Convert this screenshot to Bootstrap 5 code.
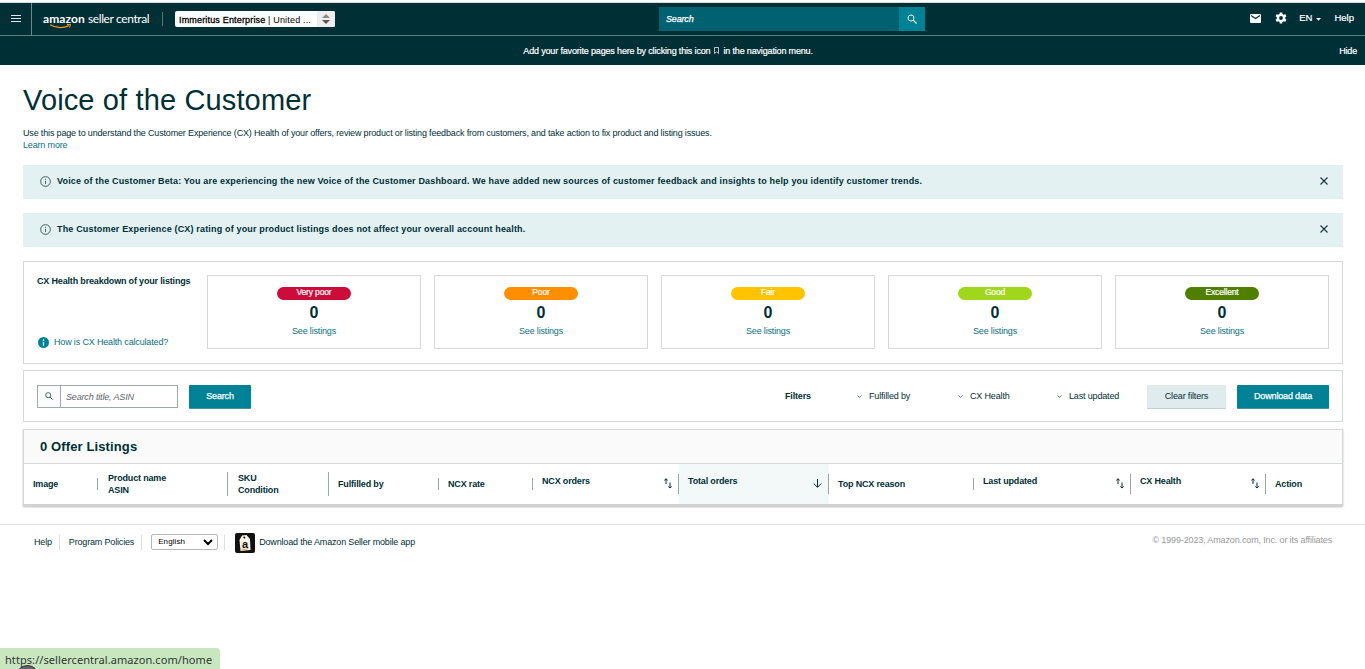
<!DOCTYPE html>
<html lang="en">
<head>
<meta charset="utf-8">
<meta name="viewport" content="width=device-width, initial-scale=1">
<title>Voice of the Customer</title>
<link rel="stylesheet" href="https://cdn.jsdelivr.net/npm/bootstrap@5.3.0/dist/css/bootstrap.min.css">
<style>
  :root { --ink:#002f36; --teal:#008296; --link:#0b6f82; --line:#d5d9d9; }
  body { font:9px/12px "Liberation Sans",Arial,sans-serif; letter-spacing:-.16px; color:var(--ink); background:#fff; height:669px; overflow:hidden; }
  svg { display:block; flex:none; }
  a { color:var(--link); text-decoration:none; }
  .topbar { border-top:1px solid #d7dcdd; margin-top:2px; background:var(--ink); height:33px; padding:0 11px 0 0; color:#fff; }
  .menu-cell { width:32px; height:33px; border-right:1px solid #6a8a8d; }
  .brand { width:107px; margin-left:11px; margin-top:-1px; font-family:Lato,sans-serif; font-size:12px; line-height:14px; position:relative; }
  .brand b { letter-spacing:.1px; }
  .brand span { letter-spacing:-.38px; margin-left:3px; }
  .brand svg { position:absolute; left:6px; top:12px; }
  .divide { width:1px; height:14px; background:#58767a; margin-left:12px; }
  .account { width:160px; height:16px; margin-left:12px; padding-left:4px; background:#fff; color:#000; border-radius:2px; overflow:hidden; letter-spacing:.2px; font-size:9px; }
  .account b { font-weight:400; -webkit-text-stroke:.3px #000; }
  .account .label { letter-spacing:.17px; padding-top:1px; }
  .account .spin { width:18px; height:16px; background:#eee; }
  .find { width:266px; height:24px; margin-left:324px; }
  .find .field { background:#006170; padding-left:7px; font-style:italic; -webkit-text-stroke:.25px #fff; }
  .find .go { width:26px; background:var(--teal); padding:0 1px 1px 0; }
  .tools { -webkit-text-stroke:.2px #fff; letter-spacing:0; font-size:9.5px; padding-bottom:2px; }
  .favbar { height:30px; border-top:1px solid #5f8080; background:var(--ink); color:#fff; padding:0 8px; -webkit-text-stroke:.2px #fff; }
  main { padding:0 22px 0 23px; }
  h1 { font-size:29px; line-height:34px; letter-spacing:.14px; margin:18px 0 10px; font-weight:400; color:var(--ink); }
  .notice { height:34px; background:#e3f1f3; padding:0 15px 2px 17px; font-weight:700; letter-spacing:.165px; }
  .panel { border:1px solid var(--line); }
  .health { height:103px; padding:13px; }
  .health .intro { width:157px; padding-bottom:2px; }
  .health .intro b { letter-spacing:-.17px; }
  .rating { width:214px; height:74px; border:1px solid var(--line); padding-top:11px; }
  .pill { width:74px; height:13px; line-height:11px; border-radius:7px; color:#fff; font-size:8.5px; -webkit-text-stroke:.2px #fff; }
  .num { font-size:16px; line-height:18px; font-weight:700; letter-spacing:0; margin:4px 0 3px; }
  .filters { height:52px; padding:0 13px; }
  .lookup { width:141px; height:23px; border:1px solid #a2a9ab; }
  .lookup .ic { width:23px; border-right:1px solid #a2a9ab; background:#fafcfc; }
  .lookup em { color:#5a6668; padding:1px 0 0 5px; }
  .act { height:24px; margin-top:1px; padding-bottom:1px; border-radius:1px; background:var(--teal); color:#fff; -webkit-text-stroke:.25px #fff; border-bottom:1px solid #48939e; }
  .act.soft { background:#e0ebed; color:var(--ink); -webkit-text-stroke:0; border-bottom-color:#c4cfd1; }
  .pick { gap:7px; }
  .listings { border:1px solid var(--line); border-bottom:2px solid #d2d2d2; box-shadow:0 1px 2px #bbb; height:77px; }
  .listings h2 { font-size:13px; line-height:33px; height:34px; font-weight:700; letter-spacing:.12px; margin:0; padding-left:16px; background:#fafafa; border-bottom:1px solid var(--line); }
  .listings table { table-layout:fixed; width:1318px; height:40px; border-collapse:collapse; letter-spacing:-.17px; }
  .listings th { padding:0; vertical-align:middle; height:40px; }
  .listings th > div { border-right:1px solid #9aa5a8; padding-left:9px; }
  .listings th.double > div { padding-left:10px; }
  .listings th:last-child > div { border:0; }
  .listings th.sorter > div { height:20px; display:flex; justify-content:space-between; padding-right:6px; }
  .listings th.sorter span { margin-top:1px; }
  .listings th.active { background:#f3f8f9; }
  footer { border-top:1px solid #e3e5e5; margin-top:18px; height:36px; padding:0 33px 1px 34px; letter-spacing:-.17px; }
  footer .bar { width:1px; height:15px; background:#dcdfe0; }
  footer .lang { width:67px; height:16px; border:1px solid #b5b9ba; border-radius:2px; padding:0 4px 0 6px; font-size:8px; letter-spacing:.1px; color:#000; }
  .copy { color:#999; letter-spacing:-.14px; }
  .status { left:0; bottom:0; width:220px; height:21px; background:#c9e7bf; border-radius:0 4px 0 0; padding:3px 0 0 5px; font:11px/18px "Noto Sans",sans-serif; letter-spacing:.07px; color:#303632; overflow:hidden; }
  .status i { position:absolute; left:16px; top:17px; width:23px; height:23px; border-radius:50%; background:#666; border:1px solid #333; }
</style>
</head>
<body class="position-relative">
<svg width="0" height="0" class="position-absolute">
  <symbol id="sort" viewBox="0 0 8 11"><path d="M2 6V.8M.3 2.300 2 .8l1.700 1.500M6 4.500v5.500M4.300 8.500 6 10l1.700-1.500" fill="none" stroke="#002f36" stroke-width="1"/></symbol>
  <symbol id="info" viewBox="0 0 12 12"><circle cx="6" cy="6" r="5.300" fill="none" stroke="#35565c"/><path d="M6 5.200v3.600M6 3v1.200" stroke="#35565c"/></symbol>
  <symbol id="cross" viewBox="0 0 8 8"><path d="m.5.5 7 7m0-7-7 7" stroke="#17343a" stroke-width="1.100"/></symbol>
  <symbol id="chev" viewBox="0 0 5 3"><path d="m.5.5 2 1.800 2-1.800" fill="none" stroke="#35565c" stroke-width=".8"/></symbol>
</svg>

<header>
  <div class="topbar d-flex align-items-center">
    <div class="menu-cell d-flex align-items-center justify-content-center"><svg width="10" height="8"><path d="M0 .5h10M0 3.500h10M0 6.500h10" stroke="#dfe8e9"/></svg></div>
    <div class="brand text-nowrap"><b>amazon</b><span>seller central</span><svg width="24" height="5"><path d="M1 .8c6 3.400 13 3.600 19 .8" fill="none" stroke="#f19a1f" stroke-width="1.200"/><path d="m18 .5 3.500-.1-1 3.100" fill="none" stroke="#f19a1f"/></svg></div>
    <div class="divide"></div>
    <div class="account d-flex align-items-center justify-content-between"><span class="label text-nowrap"><b>Immeritus Enterprise</b> | United ...</span><div class="spin d-flex align-items-center justify-content-center"><svg width="8" height="10"><path d="m0 4 4-4 4 4z" fill="#888"/><path d="m0 6 4 4 4-4z" fill="#555"/></svg></div></div>
    <div class="find d-flex"><div class="field flex-fill d-flex align-items-center">Search</div><div class="go d-flex align-items-center justify-content-center"><svg width="10" height="10"><circle cx="4" cy="4" r="3" fill="none" stroke="#fff"/><path d="m6.200 6.200 3.300 3.300" stroke="#fff" stroke-width="1.200"/></svg></div></div>
    <div class="tools d-flex align-items-center ms-auto">
      <svg width="11" height="9"><rect width="11" height="9" rx="1" fill="#fff"/><path d="m1 1.500 4.500 3 4.500-3" fill="none" stroke="#002f36" stroke-width="1.100"/></svg>
      <svg width="12" height="12" viewBox="0 0 12 12" style="margin-left:14px"><circle cx="6" cy="6" r="3.100" fill="none" stroke="#fff" stroke-width="2.400"/><path d="M6 .5v2M6 9.500v2M1.200 3.200 3 4.300M9 7.700 10.800 8.800M1.200 8.800 3 7.700M9 4.300 10.800 3.200" stroke="#fff" stroke-width="2.600"/></svg>
      <span style="margin-left:12px">EN</span><svg width="5" height="3" style="margin:2px 13px 0 4px"><path d="M0 0h5L2.500 2.700z" fill="#fff"/></svg><span>Help</span>
    </div>
  </div>
  <div class="favbar d-flex align-items-center">
    <div class="d-flex align-items-center text-nowrap mx-auto" style="padding-right:11px">Add your favorite pages here by clicking this icon<svg width="5" height="7" style="margin:0 4px"><path d="M.5.5h4v6l-2-1.700-2 1.700z" fill="none" stroke="#dfe8e9" stroke-width=".8"/></svg>in the navigation menu.</div>
    <span>Hide</span>
  </div>
</header>

<main>
  <h1>Voice of the Customer</h1>
  <div>Use this page to understand the Customer Experience (CX) Health of your offers, review product or listing feedback from customers, and take action to fix product and listing issues.</div>
  <a href="#">Learn more</a>

  <div class="notice d-flex align-items-center" style="margin-top:14px"><svg width="11" height="11"><use href="#info"/></svg><span style="margin-left:6px">Voice of the Customer Beta: You are experiencing the new Voice of the Customer Dashboard. We have added new sources of customer feedback and insights to help you identify customer trends.</span><svg class="ms-auto" width="8" height="8"><use href="#cross"/></svg></div>
  <div class="notice d-flex align-items-center" style="margin-top:14px"><svg width="11" height="11"><use href="#info"/></svg><span style="margin-left:6px">The Customer Experience (CX) rating of your product listings does not affect your overall account health.</span><svg class="ms-auto" width="8" height="8"><use href="#cross"/></svg></div>

  <section class="panel health d-flex justify-content-between" style="margin-top:14px">
    <div class="intro d-flex flex-column justify-content-between"><b>CX Health breakdown of your listings</b><a href="#" class="d-flex align-items-center"><svg width="11" height="11" style="margin:0 5px 0 1px"><circle cx="5.500" cy="5.500" r="5.500" fill="#008296"/><path d="M5.500 4.800v4M5.500 2.200v1.500" stroke="#fff" stroke-width="1.300"/></svg>How is CX Health calculated?</a></div>
    <div class="rating d-flex flex-column align-items-center"><div class="pill text-center" style="background:#cc0c39">Very poor</div><div class="num">0</div><a href="#">See listings</a></div>
    <div class="rating d-flex flex-column align-items-center"><div class="pill text-center" style="background:#ff8f00">Poor</div><div class="num">0</div><a href="#">See listings</a></div>
    <div class="rating d-flex flex-column align-items-center"><div class="pill text-center" style="background:#ffc400">Fair</div><div class="num">0</div><a href="#">See listings</a></div>
    <div class="rating d-flex flex-column align-items-center"><div class="pill text-center" style="background:#a0d61c">Good</div><div class="num">0</div><a href="#">See listings</a></div>
    <div class="rating d-flex flex-column align-items-center"><div class="pill text-center" style="background:#507f00">Excellent</div><div class="num">0</div><a href="#">See listings</a></div>
  </section>

  <section class="panel filters d-flex align-items-center" style="margin-top:6px">
    <div class="lookup d-flex"><div class="ic d-flex align-items-center justify-content-center"><svg width="8" height="8"><circle cx="3.200" cy="3.200" r="2.500" fill="none" stroke="#35565c" stroke-width=".9"/><path d="m5 5 2.600 2.600" stroke="#35565c"/></svg></div><em class="d-flex align-items-center">Search title, ASIN</em></div>
    <div class="act d-flex align-items-center justify-content-center" style="width:62px;margin-left:11px">Search</div>
    <div class="d-flex align-items-center ms-auto">
      <b style="width:72px">Filters</b>
      <div class="pick d-flex align-items-center" style="width:101px"><svg width="5" height="3"><use href="#chev"/></svg>Fulfilled by</div>
      <div class="pick d-flex align-items-center" style="width:99px"><svg width="5" height="3"><use href="#chev"/></svg>CX Health</div>
      <div class="pick d-flex align-items-center" style="width:90px"><svg width="5" height="3"><use href="#chev"/></svg>Last updated</div>
      <div class="act soft d-flex align-items-center justify-content-center" style="width:79px">Clear filters</div>
      <div class="act d-flex align-items-center justify-content-center" style="width:92px;margin-left:11px">Download data</div>
    </div>
  </section>

  <section class="listings" style="margin-top:7px">
    <h2>0 Offer Listings</h2>
    <table>
      <colgroup><col style="width:74px"><col style="width:130px"><col style="width:101px"><col style="width:110px"><col style="width:94px"><col style="width:146px"><col style="width:150px"><col style="width:145px"><col style="width:157px"><col style="width:135px"><col style="width:76px"></colgroup>
      <tr>
        <th><div>Image</div></th>
        <th class="double"><div>Product name<br>ASIN</div></th>
        <th class="double"><div>SKU<br>Condition</div></th>
        <th><div>Fulfilled by</div></th>
        <th><div>NCX rate</div></th>
        <th class="sorter"><div><span>NCX orders</span><svg width="8" height="11" style="margin-top:4px"><use href="#sort"/></svg></div></th>
        <th class="sorter active"><div><span>Total orders</span><svg width="9" height="9" style="margin-top:5px"><path d="M4.500 0v8M.7 4.500l3.800 3.800 3.800-3.800" fill="none" stroke="#002f36"/></svg></div></th>
        <th><div>Top NCX reason</div></th>
        <th class="sorter"><div><span>Last updated</span><svg width="8" height="11" style="margin-top:4px"><use href="#sort"/></svg></div></th>
        <th class="sorter"><div><span>CX Health</span><svg width="8" height="11" style="margin-top:4px"><use href="#sort"/></svg></div></th>
        <th><div>Action</div></th>
      </tr>
    </table>
  </section>
</main>

<footer class="d-flex align-items-center">
  <span>Help</span><div class="bar" style="margin:0 9px 0 7px"></div><span>Program Policies</span><div class="bar" style="margin:0 9px 0 7px"></div>
  <div class="lang d-flex align-items-center justify-content-between">English<svg width="10" height="7"><path d="m1 1 4 4 4-4" fill="none" stroke="#000" stroke-width="2"/></svg></div>
  <div class="bar" style="margin:0 10px 0 6px"></div>
  <svg width="20" height="20" viewBox="0 0 20 20" style="margin-top:2px"><rect width="20" height="20" rx="2" fill="#111"/><path d="M7 2.500 11.500 2l3.500 4 .5 11-10 1L4.500 7z" fill="#f6f2e6"/><circle cx="9.300" cy="4.500" r="1" fill="#111"/><text x="10" y="14.500" font-size="11" font-weight="700" font-family="Liberation Sans" text-anchor="middle" fill="#111">a</text><path d="M6.500 16q3 1.200 6.500-.4" stroke="#e8951c" fill="none" stroke-width=".8"/></svg>
  <span style="margin-left:4px">Download the Amazon Seller mobile app</span>
  <span class="copy ms-auto" style="margin-top:-4px">© 1999-2023, Amazon.com, Inc. or its affiliates</span>
</footer>

<div class="status position-absolute"><i></i><span class="position-relative">https://sellercentral.amazon.com/home</span></div>
<script src="https://cdn.jsdelivr.net/npm/bootstrap@5.3.0/dist/js/bootstrap.bundle.min.js"></script>
</body>
</html>
